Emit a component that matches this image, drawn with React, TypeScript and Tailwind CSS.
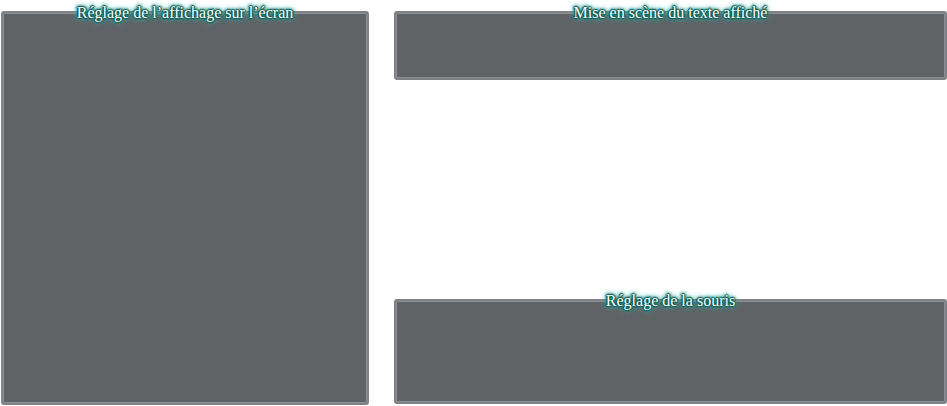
const TITLE_FONT = "font-['Liberation_Serif','Noto_Serif','DejaVu_Serif',serif]";

function Panel({ title, className }: { title: string; className: string }) {
  return (
    <div
      className={`relative rounded-[3px] border-2 border-[#7e8286] bg-[#5f6366] shadow-[inset_0_0_0_1px_#8d9195] ${className}`}
    >
      <div className="absolute -top-[10px] left-0 right-0 flex justify-center">
        <span
          className={`${TITLE_FONT} text-[16px] leading-[19px] text-white whitespace-nowrap [text-shadow:1px_0_1px_#0e5a55,-1px_0_1px_#0e5a55,0_1px_1px_#0e5a55,0_-1px_1px_#0e5a55,0_0_2px_#14665f,0_0_3px_#1b7a72,0_0_3px_#1b7a72,0_0_4px_#2a968c,0_0_4px_#2a968c,0_0_6px_#4fb3a9,0_0_7px_#7cc9c1]`}
        >
          {title}
        </span>
      </div>
    </div>
  );
}

export default function App() {
  return (
    <div className="w-[947px] h-[406px] bg-white flex pl-px pt-[11px] pb-px">
      <Panel title="Réglage de l’affichage sur l’écran" className="w-[368px] h-full" />
      <div className="ml-[25px] flex-1 flex flex-col justify-between pb-px">
        <Panel title="Mise en scène du texte affiché" className="h-[69px]" />
        <Panel title="Réglage de la souris" className="h-[105px]" />
      </div>
    </div>
  );
}
